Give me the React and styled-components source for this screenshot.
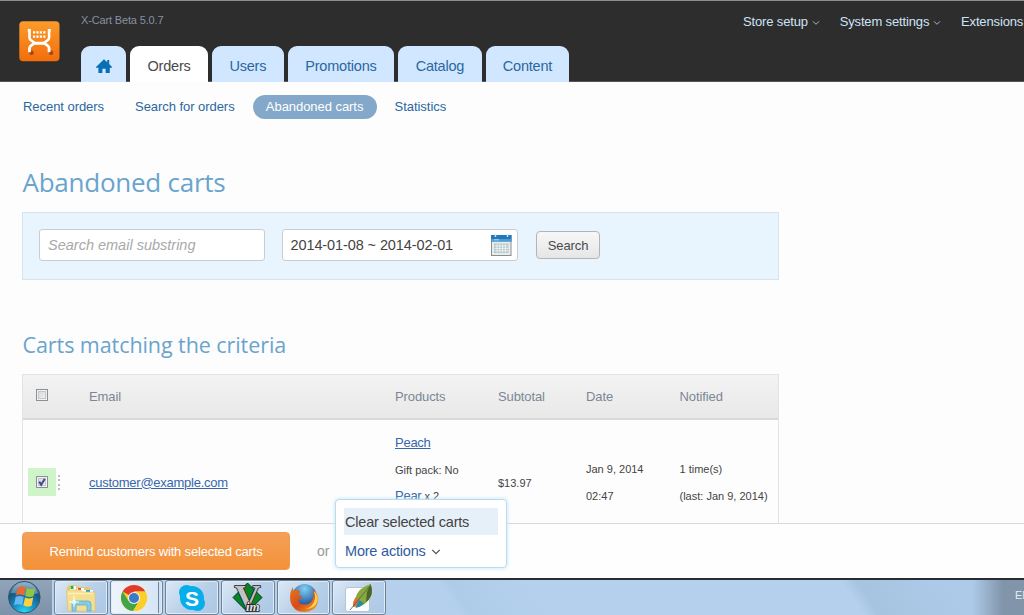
import React from 'react';
import styled, { createGlobalStyle, css } from 'styled-components';

const Global = createGlobalStyle`
  * { box-sizing: border-box; }
  body { margin: 0; background: #fdfdfd; overflow: hidden; font-family: "Liberation Sans", Arial, sans-serif; color: #444; }
  svg { display: block; flex: none; }
`;

const Page = styled.div`
  width: 1024px;
  height: 615px;
  display: flex;
  flex-direction: column;
  overflow: hidden;
`;

/* ---------- header ---------- */
const Header = styled.header`
  flex: none;
  height: 82px;
  display: flex;
  background: #2d2d2d;
  border-top: 1px solid #8b8f8d;
  border-bottom: 1px solid #565656;
`;
const LogoCell = styled.div`
  flex: none;
  width: 81px;
  padding: 20px 0 0 19px;
`;
const HeaderMain = styled.div`
  flex: none;
  width: 600px;
  display: flex;
  flex-direction: column;
  justify-content: space-between;
  margin-bottom: -1px;
`;
const Version = styled.div`
  padding-top: 12px;
  font-size: 11px;
  line-height: 14px;
  letter-spacing: -0.15px;
  color: #8790a2;
`;
const Tabs = styled.nav`
  display: flex;
  gap: 4.3px;
`;
const Tab = styled.a`
  width: ${(p) => p.$w}px;
  height: 36px;
  display: flex;
  align-items: center;
  justify-content: center;
  padding-top: 4px;
  border-radius: 9px 9px 0 0;
  font-size: 14.5px;
  letter-spacing: -0.2px;
  background: ${(p) => (p.$active ? '#fff' : '#d0e7ff')};
  color: ${(p) => (p.$active ? '#4a4a4a' : '#2b679f')};
`;
const TopMenu = styled.nav`
  flex: none;
  display: flex;
  gap: 19.7px;
  padding: 12px 0 0 62px;
`;
const TopItem = styled.a`
  display: flex;
  align-items: center;
  gap: 4px;
  height: 17px;
  font-size: 13px;
  letter-spacing: -0.14px;
  color: #cfe3f7;
  white-space: nowrap;
`;

/* ---------- content ---------- */
const Content = styled.main`
  flex: none;
  height: 441px;
  overflow: hidden;
  padding-left: 22px;
`;
const SubNav = styled.nav`
  display: flex;
  align-items: center;
  height: 25px;
  margin-top: 12px;
  font-size: 13px;
  color: #2b679f;
`;
const SubLink = styled.a`
  padding-left: 1px;
  margin-right: ${(p) => p.$gap || 0}px;
  letter-spacing: -0.05px;
  ${(p) =>
    p.$active &&
    css`
      width: 124px;
      height: 24px;
      line-height: 24px;
      padding: 0;
      text-align: center;
      border-radius: 12px;
      background: #83a8ca;
      color: #fff;
    `}
`;
const Title = styled.h1`
  margin: 45px 0 0;
  padding-left: 0.5px;
  font: 400 26px/36px "Open Sans", sans-serif;
  letter-spacing: -0.25px;
  color: #69a4cd;
`;
const Subtitle = styled.h2`
  margin: 50px 0 0;
  padding-left: 0.5px;
  font: 400 21.5px/30px "Open Sans", sans-serif;
  letter-spacing: -0.07px;
  color: #69a4cd;
`;
const Filter = styled.div`
  width: 757px;
  height: 68px;
  margin-top: 12px;
  padding: 0 16px 2px;
  display: flex;
  align-items: center;
  border: 1px solid #d6e4ec;
  background: #e8f5ff;
`;
const Field = styled.div`
  width: ${(p) => p.$w}px;
  height: 32px;
  margin-right: ${(p) => p.$gap}px;
  padding: 0 5px 0 8px;
  display: flex;
  align-items: center;
  justify-content: space-between;
  border: 1px solid #c9cdd0;
  border-radius: 3px;
  background: #fff;
  font-size: 14.5px;
  white-space: nowrap;
  font-style: ${(p) => (p.$empty ? 'italic' : 'normal')};
  color: ${(p) => (p.$empty ? '#a9a9a9' : '#444')};
`;
const DateText = styled.span`
  letter-spacing: -0.1px;
  margin-left: -0.5px;
`;
const SearchButton = styled.button`
  width: 64px;
  height: 28px;
  padding: 0;
  border: 1px solid #b4b4b4;
  border-radius: 4px;
  background: linear-gradient(#f7f7f7, #e6e6e6);
  font: 13px "Liberation Sans", Arial, sans-serif;
  letter-spacing: -0.1px;
  color: #4a4a4a;
`;

/* ---------- table ---------- */
const Table = styled.div`
  width: 757px;
  margin-top: 14px;
  border: 1px solid #e3e3e3;
`;
const columns = css`
  display: grid;
  grid-template-columns: 66px 306px 103px 88px 93.5px 1fr;
`;
const HeadRow = styled.div`
  ${columns}
  align-items: center;
  height: 45px;
  background: linear-gradient(#f3f3f3, #e8e8e8);
  border-bottom: 2px solid #d9d9d9;
  font-size: 13px;
  letter-spacing: -0.1px;
  color: #7b8795;
`;
const BodyRow = styled.div`
  ${columns}
  align-items: center;
  height: 126px;
  font-size: 11px;
  line-height: 27px;
  white-space: nowrap;
`;
const HeadCheck = styled.div`
  padding: 0 0 3px 13px;
`;
const RowCheck = styled.div`
  display: flex;
  align-items: center;
  gap: 2px;
  padding: 0 0 2px 5px;
`;
const Selected = styled.div`
  width: 28px;
  height: 28px;
  display: flex;
  align-items: center;
  justify-content: center;
  background: #cff4ca;
`;
const Grip = styled.div`
  width: 2px;
  height: 15px;
  background: repeating-linear-gradient(#bdbdbd 0 2px, transparent 2px 4.5px);
`;
const Box = styled.div`
  width: 12px;
  height: 12px;
  border: 1px solid #8e8f8f;
  box-shadow: inset 0 0 0 1px #f2f2f2, inset 0 0 0 2px #c3c6ca;
  background: linear-gradient(135deg, #cfd3d9, #f7f7f7);
`;
const Cell = styled.div``;
const Products = styled.div`
  align-self: start;
  padding-top: 10px;
  line-height: 26.7px;
`;
const Link = styled.a`
  font-size: 13px;
  line-height: 1;
  letter-spacing: -0.26px;
  text-decoration: underline;
  color: #3566ae;
`;

/* ---------- action bar ---------- */
const ActionBar = styled.footer`
  position: relative;
  flex: none;
  height: 55px;
  display: flex;
  align-items: center;
  padding-left: 22px;
  border-top: 1px solid #d8d8d8;
  background: #fefefe;
`;
const Remind = styled.button`
  width: 268px;
  height: 38px;
  padding: 0;
  border: 1px solid #ee9a52;
  border-radius: 4px;
  background: linear-gradient(#f59f58, #f39238);
  font: 13px "Liberation Sans", Arial, sans-serif;
  letter-spacing: -0.16px;
  color: #fff;
`;
const Or = styled.span`
  margin-left: 27px;
  font-size: 14px;
  color: #999;
`;
const Popup = styled.div`
  position: absolute;
  left: 335px;
  bottom: 10px;
  width: 172px;
  height: 69px;
  padding: 8px 8px 0;
  border: 1px solid #b9dcec;
  border-radius: 4px;
  background: #fff;
  box-shadow: 0 0 4px #bfe4f3;
  font-size: 14.5px;
  letter-spacing: -0.2px;
`;
const PopupItem = styled.div`
  width: 154px;
  height: 27px;
  padding-left: 1px;
  line-height: 28px;
  background: #e6f0f9;
  color: #444;
`;
const PopupToggle = styled.div`
  display: flex;
  align-items: center;
  gap: 5px;
  height: 31px;
  padding-left: 1px;
  color: #2f5ca0;
`;

/* ---------- taskbar ---------- */
const Taskbar = styled.div`
  flex: none;
  height: 37px;
  display: flex;
  gap: 2px;
  border-top: 2px solid #292c31;
  background:
    linear-gradient(90deg, transparent 972px, #8195aa 1003px),
    linear-gradient(56deg, #b4d0ec 44%, #aecbe8 45%, #b4d0ec 52%, #b4d0ec 82.5%, #a6c3df 84%, #adcbe9 92%);
`;
const Start = styled.div`
  width: 52px;
  padding-left: 8px;
  background: linear-gradient(#91a5ba, #7c92a8);
`;
const TaskButton = styled.div`
  width: 53.7px;
  height: 35px;
  display: flex;
  align-items: center;
  justify-content: center;
  border: 1px solid #6f8296;
  border-radius: 3px;
  box-shadow: inset 0 0 0 1px #dfebf7;
  background: linear-gradient(135deg, #dce9f6, #b8cfe8 55%, #abc8e5);
  ${(p) => p.$stack && css`
    padding-right: 5px;
    background: linear-gradient(90deg, #eef4fb 0, #d7e5f4 47px, #71869b 47px 48px, #cfe0f1 48px);
  `}
`;
const Language = styled.span`
  margin-left: auto;
  width: 9px;
  overflow: hidden;
  padding-top: 9px;
  font-size: 11px;
  line-height: 13px;
  color: #e7ecf0;
`;

const ChevronIcon = styled.svg`
  margin-top: 2px;
`;
const Chevron = ({ color = '#a9b8c6', size = 8, w = 1 }) => (
  <ChevronIcon width={size} height={size} viewBox="0 0 8 8" fill="none" stroke={color} strokeWidth={w}>
    <path d="M1 2.3 4 5.3 7 2.3" />
  </ChevronIcon>
);

const Logo = () => (
  <svg width="41" height="41" viewBox="0 0 41 41">
    <defs>
      <linearGradient id="lg" x1="0" y1="0" x2="0" y2="1">
        <stop offset="0" stopColor="#fb9c2b" />
        <stop offset="1" stopColor="#f26d0d" />
      </linearGradient>
    </defs>
    <rect x=".3" y=".2" width="40.2" height="40" rx="4" fill="url(#lg)" />
    <circle cx="12.5" cy="31.7" r="2.2" fill="#a8430c" />
    <circle cx="32" cy="31.7" r="2.2" fill="#a8430c" />
    <path d="M8.8 9.4h1.7v7q0 1.700 1.500 2.800l4 3h8.600l4-3q1.500-1.100 1.500-2.800v-7h1.700" fill="none" stroke="#fff" strokeWidth="2.6" />
    <path d="M10.500 31.300v-4q0-1.700 1.500-2.700l3.500-2.400h9.600l3.500 2.400q1.500 1 1.500 2.700v4" fill="none" stroke="#fff" strokeWidth="2.8" />
    <path d="M14 11.300h12.600M14 15.600h12.600" stroke="#fff" strokeWidth="2.300" strokeDasharray="2.200 1.200" />
  </svg>
);

const Home = () => (
  <svg width="16" height="15" viewBox="0 0 16 15" fill="#0870b5">
    <path d="M8 .2 11.2 3.2V1.1h2v4L16 8v.8h-2.2V14H9.6V9.8H6.4V14H2.4V8.8H0V8Z" />
  </svg>
);

const Calendar = () => (
  <svg width="21" height="22" viewBox="0 0 21 22">
    <rect x=".5" y="1.5" width="19.5" height="20" fill="#e6edee" stroke="#8c8c91" />
    <path d="M0 1h20.5v6.5H0Z" fill="#2379ba" />
    <path d="M0 5h20.5v2.5H0Z" fill="#4c9cd5" />
    <path d="M3 5.8h5" stroke="#b7daf0" />
    <path d="M4.5 0v3M16.5 0v3" stroke="#d8e6ee" strokeWidth="1.4" />
    <rect x="3" y="9.5" width="14.5" height="9.5" fill="#b5c7c8" />
    <path d="M3.5 12h13.5M3.5 14.4h13.5M3.5 16.8h13.5M6 10v8.5M8.8 10v8.5M11.6 10v8.5M14.4 10v8.5" stroke="#f2f8f8" strokeWidth=".8" />
  </svg>
);

const Check = () => (
  <svg width="10" height="10" viewBox="0 0 10 10" fill="none" stroke="#3b4c94" strokeWidth="2">
    <path d="M2.2 4.6 4.2 7.8 7.8 1.8" />
  </svg>
);

const Windows = () => (
  <svg width="34" height="34" viewBox="0 0 34 34">
    <defs>
      <radialGradient id="orb" cx=".5" cy="1" r=".95">
        <stop offset="0" stopColor="#2ce0fa" />
        <stop offset=".35" stopColor="#1595cd" />
        <stop offset=".75" stopColor="#17567f" />
        <stop offset="1" stopColor="#6d97b3" />
      </radialGradient>
    </defs>
    <circle cx="16.3" cy="17.2" r="15.8" fill="url(#orb)" stroke="#34566f" />
    <path d="M3 13Q7 2 16.5 2.2T30 13Q22 17 16 15T3 13Z" fill="#d0e3ee" opacity=".35" />
    <path d="M10 7.6q4-2.2 7.6-.2L16 15.5q-3.8-2-8 0Z" fill="#ee6630" />
    <path d="M18.8 8q4 2 8.3.2L25.5 16.2q-4 1.7-8.2-.2Z" fill="#91c73e" />
    <path d="M7.7 16.8q4-1.8 8 .1L14.1 25q-4-1.8-8 .2Z" fill="#66b9ee" />
    <path d="M17 17.4q4 2 8.2.2L23.6 25.8q-4 1.8-8.2-.2Z" fill="#fcd13d" />
  </svg>
);

const Explorer = () => (
  <svg width="32" height="30" viewBox="0 0 32 30">
    <path d="M2 5 4 2h7l2 2h10l3 2v22H3Z" fill="#e5c969" />
    <path d="M5 3h6v4H5Z" fill="#fff" />
    <path d="M5.5 3h3v3h-3Z" fill="#2eae44" />
    <path d="M12 5h7v4h-7Z" fill="#fff" />
    <path d="M13 5h3v2h-3Z" fill="#e34d2f" />
    <path d="M19 7h9v4h-9Z" fill="#fff" />
    <path d="M21 7h4v2h-4Z" fill="#299bdd" />
    <path d="M1.5 7h14l2 2h12.5v19H3Z" fill="#f4df91" stroke="#dfc16b" strokeWidth=".7" />
    <path d="M3 10.5h25" stroke="#fff0b6" strokeWidth="1.5" />
    <path d="M7 28v-7q0-3 3-3h13q3 0 3 3v7h-4v-6H11v6Z" fill="#85cce8" stroke="#5faccc" strokeWidth=".8" />
    <path d="M9 13v11M4 19h10" stroke="#fff" strokeWidth="1" />
    <circle cx="9" cy="19" r="2.2" fill="#e1fcff" />
  </svg>
);

const Chrome = () => (
  <svg width="28" height="28" viewBox="0 0 28 28">
    <circle cx="14" cy="14" r="13" fill="#fbd02c" />
    <path d="M14 14 2.7 7.5A13 13 0 0 1 25.3 7.5H14Z" fill="#e23a2d" />
    <path d="M2.7 7.5A13 13 0 0 0 13 27l5.5-9-4.5-3-5.5 2Z" fill="#43a548" />
    <path d="M14 7.5h11.3A13 13 0 0 1 13 27l6.5-10Z" fill="#fbcf27" />
    <circle cx="14" cy="14" r="6" fill="#f0f5f5" />
    <circle cx="14" cy="14" r="5" fill="#3c7ac6" />
  </svg>
);

const SkypeLetter = styled.text`
  font: bold 21px "Liberation Sans", Arial, sans-serif;
  fill: #fff;
`;
const Skype = () => (
  <svg width="28" height="28" viewBox="0 0 28 28">
    <g fill="#08aeea">
      <circle cx="14" cy="14" r="12" />
      <circle cx="8.5" cy="8.5" r="7.5" />
      <circle cx="19.5" cy="19.5" r="7.5" />
    </g>
    <SkypeLetter x="14" y="21.5" textAnchor="middle">S</SkypeLetter>
  </svg>
);

const VimText = styled.text`
  font: ${(p) => (p.$big ? 'bold 34px' : 'italic bold 13px')} "Liberation Serif", serif;
  fill: ${(p) => (p.$big ? '#c2c2c6' : '#e2e2e2')};
  stroke: #222;
  stroke-width: 1.6px;
  paint-order: stroke;
`;
const Vim = () => (
  <svg width="32" height="32" viewBox="0 0 32 32">
    <path d="M15.5 1 30 15.5 15.5 30 1 15.5Z" fill="#078526" stroke="#07340f" />
    <VimText $big x="2.5" y="26" textLength="26" lengthAdjust="spacingAndGlyphs">V</VimText>
    <VimText x="14" y="28.500">im</VimText>
  </svg>
);

const Firefox = () => (
  <svg width="30" height="30" viewBox="0 0 30 30">
    <defs>
      <linearGradient id="ff" x1="0" y1="0" x2="1" y2="1">
        <stop offset="0" stopColor="#e87a20" />
        <stop offset=".5" stopColor="#d84a16" />
        <stop offset="1" stopColor="#f3a52c" />
      </linearGradient>
      <radialGradient id="globe" cx=".5" cy=".2" r=".8">
        <stop offset="0" stopColor="#7fd0f4" />
        <stop offset="1" stopColor="#153f8d" />
      </radialGradient>
    </defs>
    <circle cx="15.5" cy="13" r="12" fill="url(#globe)" />
    <path d="M4 4q0 3 1 4 3-1.5 6-.5 0 2-2 4l4 2q-1 3-4 3 1 5 6.5 5 7 0 8.5-6 1-4-.5-9 7 5 5.5 12-2 10.5-13.5 10.5-11 0-14-10Q0 9.500 4 4Z" fill="url(#ff)" />
    <path d="M24.5 8q3 6 .5 11-3 6-9 7 10 0 12.5-8 1.300-6-4-10Z" fill="#ffd24b" />
  </svg>
);

const Feather = () => (
  <svg width="30" height="30" viewBox="0 0 30 30">
    <rect x="1.5" y="4.5" width="24" height="24" rx="2.5" fill="#fcfdfe" stroke="#b8c6d3" />
    <path d="M26.5 1q2.5 6 .5 12-4 8-12 11l-4-6q1-8 6-12Q21 3 26.5 1Z" fill="#8ba83a" />
    <path d="M26.5 1q2.500 6 .5 12-2 4-5 6l1-10Z" fill="#48652c" />
    <path d="M9 24q-.5-6 3-10l5 6q-3 4-8 4Z" fill="#e5702a" />
    <path d="m15 17 5 3q-3 4-8.5 5Z" fill="#258ca6" />
    <path d="M25 4 6 27" stroke="#3a6173" strokeWidth=".8" />
  </svg>
);

export default function App() {
  return (
    <Page>
      <Global />
      <Header>
        <LogoCell><Logo /></LogoCell>
        <HeaderMain>
          <Version>X-Cart Beta 5.0.7</Version>
          <Tabs>
            <Tab $w={45}><Home /></Tab>
            <Tab $w={77.5} $active>Orders</Tab>
            <Tab $w={71.5}>Users</Tab>
            <Tab $w={106}>Promotions</Tab>
            <Tab $w={83.5}>Catalog</Tab>
            <Tab $w={83}>Content</Tab>
          </Tabs>
        </HeaderMain>
        <TopMenu>
          <TopItem>Store setup <Chevron /></TopItem>
          <TopItem>System settings <Chevron /></TopItem>
          <TopItem>Extensions</TopItem>
        </TopMenu>
      </Header>

      <Content>
        <SubNav>
          <SubLink $gap={30}>Recent orders</SubLink>
          <SubLink $gap={18}>Search for orders</SubLink>
          <SubLink $active $gap={17}>Abandoned carts</SubLink>
          <SubLink>Statistics</SubLink>
        </SubNav>
        <Title>Abandoned carts</Title>
        <Filter>
          <Field $w={226} $gap={17} $empty>Search email substring</Field>
          <Field $w={236} $gap={18}><DateText>2014-01-08 ~ 2014-02-01</DateText><Calendar /></Field>
          <SearchButton>Search</SearchButton>
        </Filter>
        <Subtitle>Carts matching the criteria</Subtitle>
        <Table>
          <HeadRow>
            <HeadCheck><Box /></HeadCheck>
            <Cell>Email</Cell>
            <Cell>Products</Cell>
            <Cell>Subtotal</Cell>
            <Cell>Date</Cell>
            <Cell>Notified</Cell>
          </HeadRow>
          <BodyRow>
            <RowCheck>
              <Selected><Box><Check /></Box></Selected>
              <Grip />
            </RowCheck>
            <Cell><Link>customer@example.com</Link></Cell>
            <Products>
              <div><Link>Peach</Link></div>
              <div>Gift pack: No</div>
              <div><Link>Pear</Link> x 2</div>
            </Products>
            <Cell>$13.97</Cell>
            <Cell>Jan 9, 2014<br />02:47</Cell>
            <Cell>1 time(s)<br />(last: Jan 9, 2014)</Cell>
          </BodyRow>
        </Table>
      </Content>

      <ActionBar>
        <Remind>Remind customers with selected carts</Remind>
        <Or>or</Or>
        <Popup>
          <PopupItem>Clear selected carts</PopupItem>
          <PopupToggle>More actions <Chevron color="#555" size={10} w={1.1} /></PopupToggle>
        </Popup>
      </ActionBar>

      <Taskbar>
        <Start><Windows /></Start>
        <TaskButton><Explorer /></TaskButton>
        <TaskButton $stack><Chrome /></TaskButton>
        <TaskButton><Skype /></TaskButton>
        <TaskButton><Vim /></TaskButton>
        <TaskButton><Firefox /></TaskButton>
        <TaskButton><Feather /></TaskButton>
        <Language>EN</Language>
      </Taskbar>
    </Page>
  );
}
